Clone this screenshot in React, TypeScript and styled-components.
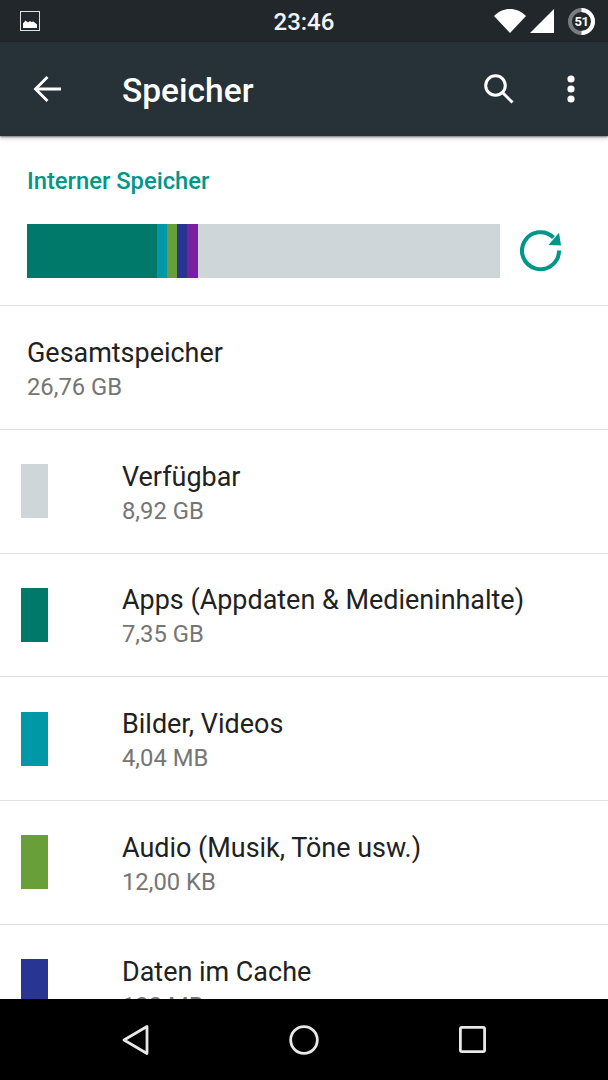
import React from "react";
import styled, { createGlobalStyle } from "styled-components";

const GlobalStyle = createGlobalStyle`
  html, body {
    margin: 0;
    padding: 0;
    background: #ffffff;
  }
  body {
    font-family: Roboto, "Liberation Sans", sans-serif;
  }
`;

interface IEntry {
  title: string;
  size: string;
  color: string;
}

const ENTRIES: IEntry[] = [
  { title: "Verfügbar", size: "8,92 GB", color: "#ced6d9" },
  { title: "Apps (Appdaten & Medieninhalte)", size: "7,35 GB", color: "#00796b" },
  { title: "Bilder, Videos", size: "4,04 MB", color: "#0097a7" },
  { title: "Audio (Musik, Töne usw.)", size: "12,00 KB", color: "#689f38" },
  { title: "Daten im Cache", size: "128 MB", color: "#283593" },
];

const SEGMENTS = [
  { color: "#00796b", width: 130 },
  { color: "#0097a7", width: 10 },
  { color: "#689f38", width: 10 },
  { color: "#283593", width: 10 },
  { color: "#7b1fa2", width: 10.5 },
];

const App: React.FC = () => {
  return (
    <Screen>
      <GlobalStyle />
      <StatusBar>
        <PictureIcon viewBox="0 0 20 20">
          <rect x="0.5" y="0.5" width="19" height="19" fill="none" stroke="#e0e0e0" strokeWidth="1" />
          <path d="M3 17v-4.500l2.500-3 2.500 2 2-1.500 1.500 1 2-.5 3.500 3V17z" fill="#ffffff" />
        </PictureIcon>
        <Clock>23:46</Clock>
        <StatusIcons>
          <svg width="32" height="24" viewBox="0 0 32 24">
            <path d="M0 7C4.500 2.500 10 0 16 0s11.500 2.500 16 7L16 24z" fill="#ffffff" />
          </svg>
          <svg width="24" height="24" viewBox="0 0 24 24">
            <path d="M0 24L24 0v24z" fill="#ffffff" />
          </svg>
          <Battery>
            <svg width="27" height="27" viewBox="0 0 27 27">
              <circle cx="13.500" cy="13.500" r="11.500" fill="none" stroke="#787d80" strokeWidth="4" />
              <path d="M13.500 2a11.500 11.500 0 0 1 0 23" fill="none" stroke="#ffffff" strokeWidth="4" />
            </svg>
            <BatteryLabel>51</BatteryLabel>
          </Battery>
        </StatusIcons>
      </StatusBar>
      <Toolbar>
        <BackSlot>
          <svg width="28" height="28" viewBox="0 0 28 28">
            <path d="M28 14H3M14.500 2L2.500 14l12 12" fill="none" stroke="#ffffff" strokeWidth="2.800" />
          </svg>
        </BackSlot>
        <ToolbarTitle>Speicher</ToolbarTitle>
        <ToolbarActions>
          <svg width="30" height="30" viewBox="0 0 30 30">
            <circle cx="11.500" cy="11.500" r="9.800" fill="none" stroke="#ffffff" strokeWidth="3" />
            <path d="M18.500 18.500L28.500 28.500" fill="none" stroke="#ffffff" strokeWidth="3" />
          </svg>
          <svg width="8" height="28" viewBox="0 0 8 28">
            <circle cx="4" cy="4" r="3.600" fill="#ffffff" />
            <circle cx="4" cy="14" r="3.600" fill="#ffffff" />
            <circle cx="4" cy="24" r="3.600" fill="#ffffff" />
          </svg>
        </ToolbarActions>
      </Toolbar>
      <Content>
        <SectionTitle>Interner Speicher</SectionTitle>
        <BarRow>
          <UsageBar>
            {SEGMENTS.map((segment) => (
              <Segment key={segment.color} $color={segment.color} $width={segment.width} />
            ))}
          </UsageBar>
          <svg width="42" height="42" viewBox="0 0 42 42">
            <path
              d="M39 20.500A18.500 18.500 0 1 1 33.500 7.500"
              fill="none"
              stroke="#009688"
              strokeWidth="4"
            />
            <path d="M39 2.800L41 15.500L28.500 15z" fill="#009688" />
          </svg>
        </BarRow>
        <Row>
          <RowText>
            <RowTitle>Gesamtspeicher</RowTitle>
            <RowSize>26,76 GB</RowSize>
          </RowText>
        </Row>
        {ENTRIES.map((entry) => (
          <Row key={entry.title} $swatch>
            <Swatch $color={entry.color} />
            <RowText>
              <RowTitle>{entry.title}</RowTitle>
              <RowSize>{entry.size}</RowSize>
            </RowText>
          </Row>
        ))}
      </Content>
      <NavBar>
        <svg width="27" height="32" viewBox="0 0 27 32">
          <path d="M25 2.500V29.500L2 16z" fill="none" stroke="#e8e8e8" strokeWidth="2.800" strokeLinejoin="round" />
        </svg>
        <svg width="30" height="30" viewBox="0 0 30 30">
          <circle cx="15" cy="15" r="13.300" fill="none" stroke="#e8e8e8" strokeWidth="2.800" />
        </svg>
        <svg width="27" height="27" viewBox="0 0 27 27">
          <rect x="1.400" y="1.400" width="24.200" height="24.200" rx="1.500" fill="none" stroke="#e8e8e8" strokeWidth="2.800" />
        </svg>
      </NavBar>
    </Screen>
  );
};

const Screen = styled.div`
  width: 608px;
  height: 1080px;
  display: flex;
  flex-direction: column;
  overflow: hidden;
  background: #ffffff;
`;

const StatusBar = styled.div`
  height: 42px;
  flex: none;
  display: flex;
  align-items: center;
  justify-content: space-between;
  padding: 0 13px 0 20px;
  background: #21272b;
  position: relative;
`;

const PictureIcon = styled.svg`
  width: 20px;
  height: 20px;
`;

const Clock = styled.div`
  position: absolute;
  left: 273.500px;
  top: 8px;
  font-size: 24px;
  line-height: 28px;
  font-weight: 500;
  color: #f4f4f4;
`;

const StatusIcons = styled.div`
  display: flex;
  align-items: center;
  gap: 14px;

  svg:first-child {
    margin-right: -10px;
  }
`;

const Battery = styled.div`
  position: relative;
  width: 27px;
  height: 27px;
`;

const BatteryLabel = styled.span`
  position: absolute;
  inset: 0;
  display: flex;
  align-items: center;
  justify-content: center;
  font-size: 13px;
  font-weight: 700;
  letter-spacing: -0.5px;
  color: #ffffff;
`;

const Toolbar = styled.div`
  height: 94px;
  flex: none;
  display: flex;
  align-items: center;
  background: #263238;
  position: relative;
  z-index: 1;
  box-shadow: 0 1px 2px rgba(0, 0, 0, 0.5), 0 3px 5px rgba(0, 0, 0, 0.12);
`;

const BackSlot = styled.div`
  width: 122px;
  flex: none;
  display: flex;
  padding-left: 33px;
  box-sizing: border-box;
`;

const ToolbarTitle = styled.div`
  flex: 1;
  padding-top: 2px;
  font-size: 33.500px;
  font-weight: 500;
  color: #ffffff;
`;

const ToolbarActions = styled.div`
  display: flex;
  align-items: center;
  gap: 53px;
  padding-right: 33px;
`;

const Content = styled.div`
  flex: 1;
  min-height: 0;
  overflow: hidden;
  background: #ffffff;
`;

const SectionTitle = styled.div`
  padding: 30px 27px 0;
  font-size: 23.750px;
  line-height: 30px;
  font-weight: 500;
  color: #009688;
`;

const BarRow = styled.div`
  height: 82px;
  margin-top: 28px;
  padding-left: 27px;
  display: flex;
  align-items: flex-start;
  gap: 20px;
  box-sizing: border-box;
  border-bottom: 1px solid #e2e2e2;

  svg {
    margin-top: 6px;
  }
`;

const UsageBar = styled.div`
  width: 473px;
  height: 54px;
  flex: none;
  display: flex;
  background: #ced6d9;
`;

const Segment = styled.div<{ $color: string; $width: number }>`
  width: ${(props) => props.$width}px;
  background: ${(props) => props.$color};
`;

const Row = styled.div<{ $swatch?: boolean }>`
  height: 123.750px;
  display: flex;
  align-items: center;
  gap: 74px;
  padding-left: ${(props) => (props.$swatch ? "21px" : "27px")};
  box-sizing: border-box;
  border-bottom: 1px solid #e2e2e2;
`;

const Swatch = styled.div<{ $color: string }>`
  width: 27px;
  height: 54px;
  flex: none;
  background: ${(props) => props.$color};
`;

const RowText = styled.div`
  display: flex;
  flex-direction: column;
  padding-top: 3px;
`;

const RowTitle = styled.div`
  font-size: 26.950px;
  line-height: 36px;
  color: #212121;
`;

const RowSize = styled.div`
  font-size: 23.800px;
  line-height: 32px;
  color: #757575;
`;

const NavBar = styled.div`
  height: 81px;
  flex: none;
  display: flex;
  align-items: center;
  justify-content: space-between;
  padding: 0 122px;
  background: #000000;
`;

export default App;
